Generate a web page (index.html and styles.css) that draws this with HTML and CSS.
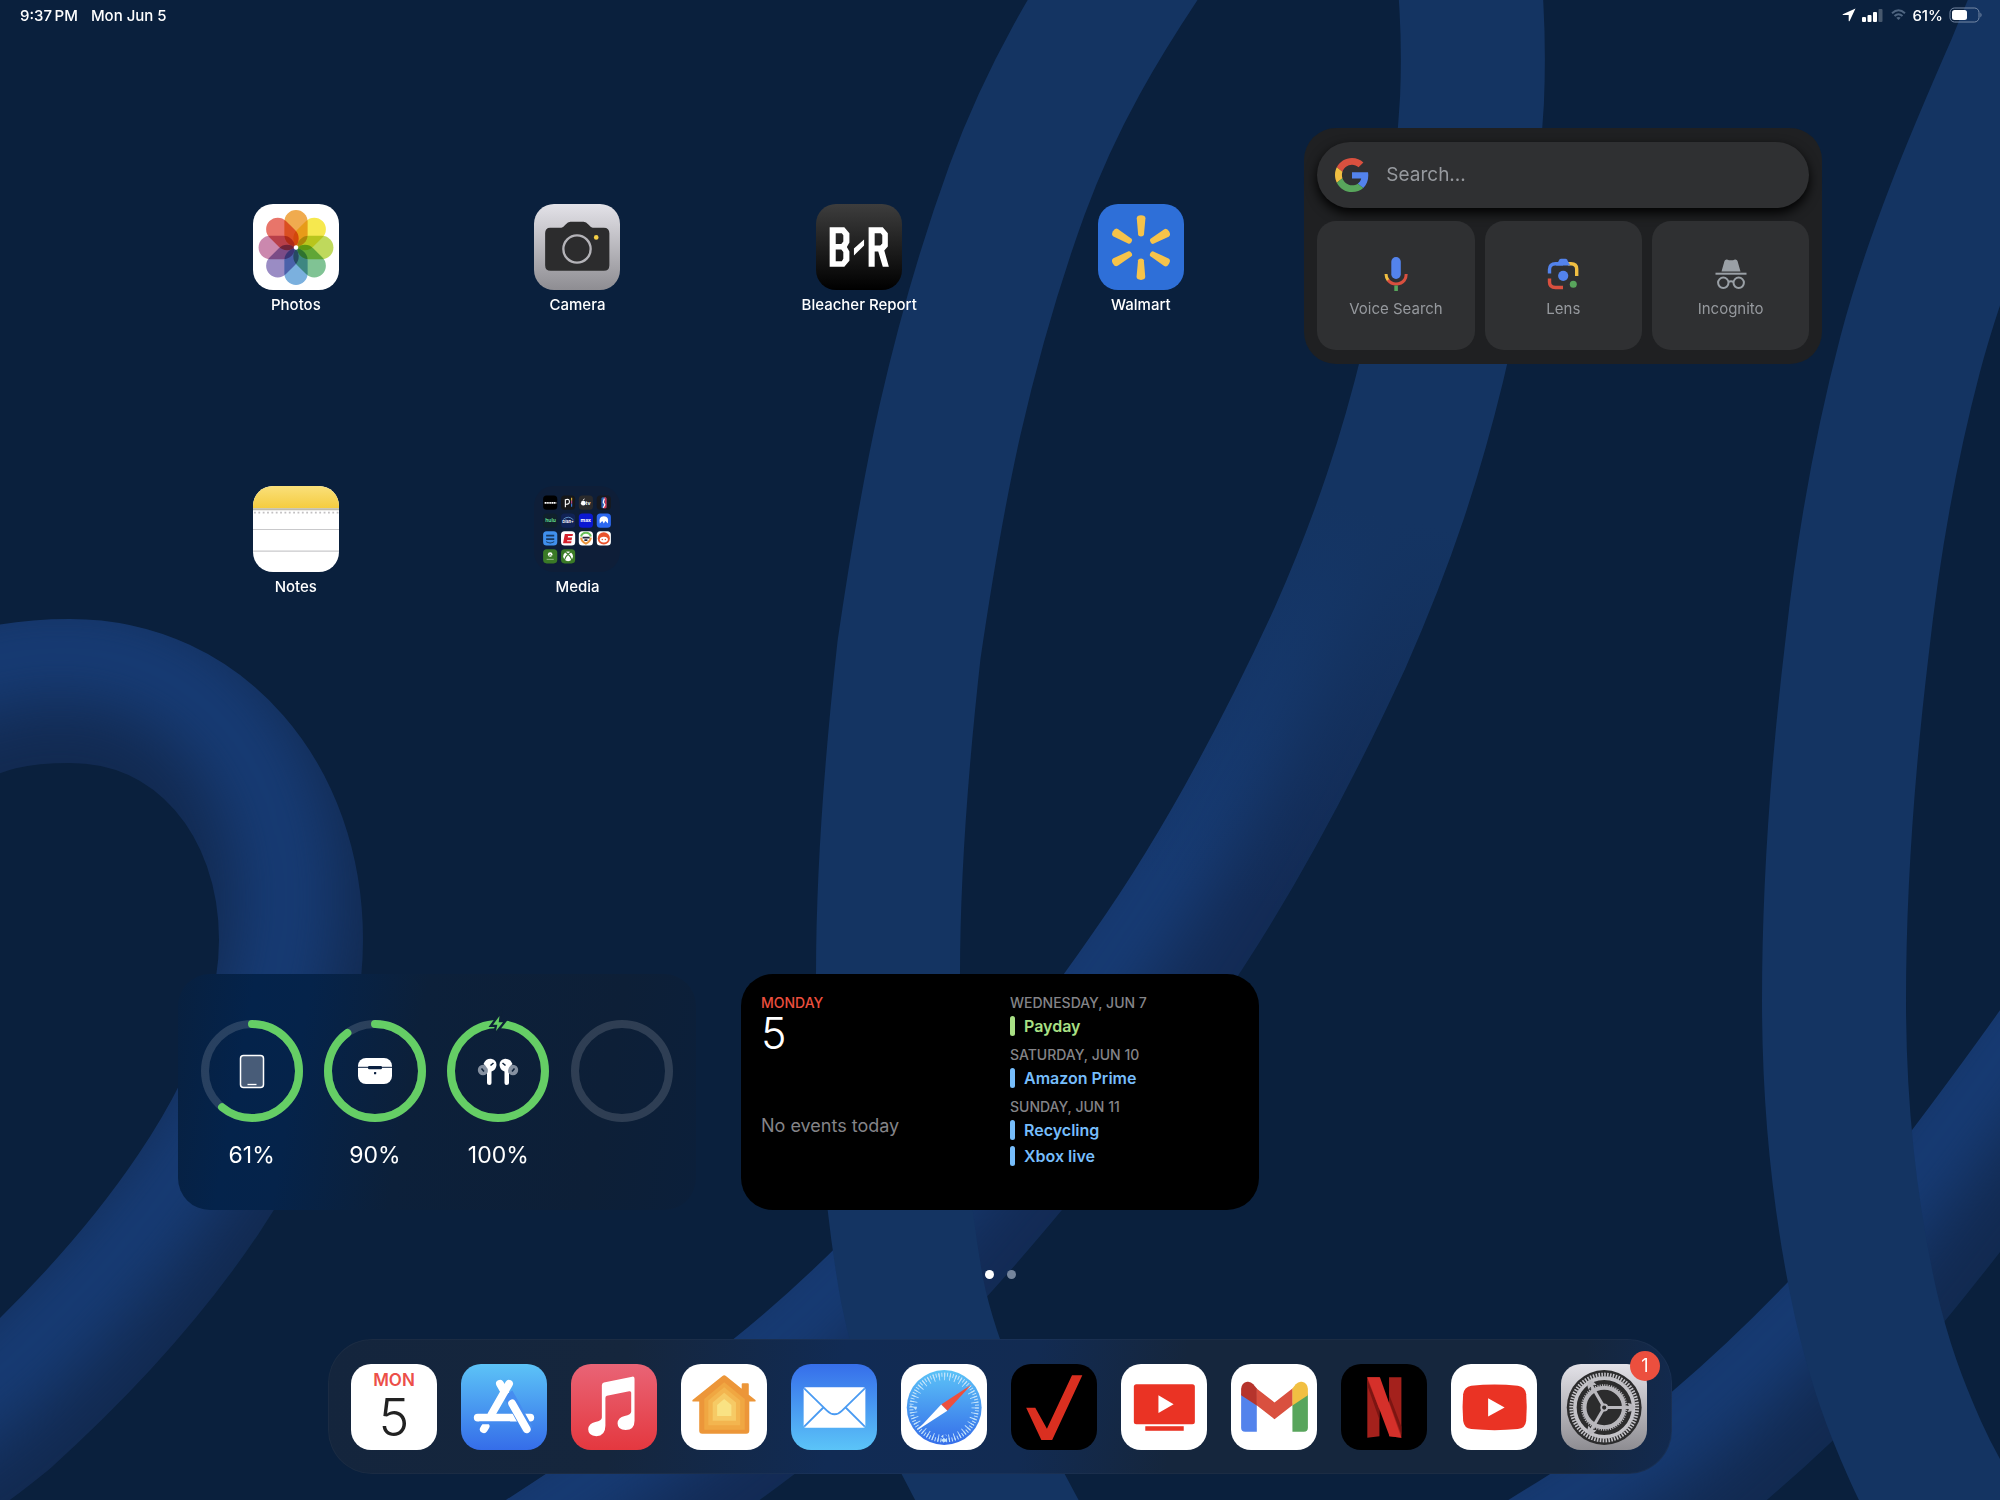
FILE: index.html
```html
<!DOCTYPE html>
<html lang="en">
<head>
<meta charset="utf-8">
<title>Home Screen</title>
<link rel="stylesheet" href="styles.css">
</head>
<body>
<svg class="wallpaper" viewBox="0 0 2000 1500" preserveAspectRatio="none" aria-hidden="true">
  <defs>
    <path id="s-left" d="M-80 735C-25 696 25 691 70 691C200 691 291 800 291 940C291 1110 140 1290 3 1414C-50 1457 -90 1484 -140 1504"/>
    <path id="s-mid" d="M500 1590C560 1550 610 1520 672 1474C741 1426 813 1373 895 1290C974 1207 1077 1083 1152 974C1229 865 1293 740 1340 638C1385 536 1411 455 1433 365C1455 275 1468 171 1472 100C1475 29 1470 -20 1464 -80"/>
    <path id="s-front" d="M1165 -80C1095 20 1050 100 1017 190C985 278 966 350 950 420C932 500 920 575 909 650C897 758 888 866 888 974C888 1080 893 1185 912 1290C925 1355 950 1415 983 1474C1000 1505 1015 1535 1035 1570"/>
    <path id="s-low" d="M1440 1620C1510 1585 1560 1553 1593 1532C1640 1502 1680 1478 1718 1447C1758 1413 1797 1376 1832 1340C1875 1297 1960 1190 2058 1053L2150 920"/>
    <path id="s-right" d="M2130 -160C2080 -80 2045 0 2018 67C1975 165 1935 260 1910 355C1885 450 1868 548 1857 648C1843 765 1834 880 1834 1000C1834 1110 1845 1210 1866 1305C1880 1365 1895 1405 1915 1450C1935 1495 1960 1535 1990 1575"/>
    <filter id="soft" filterUnits="userSpaceOnUse" x="-300" y="-300" width="2600" height="2100" color-interpolation-filters="sRGB"><feGaussianBlur stdDeviation="34"/></filter>
    <linearGradient id="fade" gradientUnits="userSpaceOnUse" x1="1330" y1="500" x2="1230" y2="900"><stop stop-color="#143462"/><stop offset="1" stop-color="#143462" stop-opacity="0"/></linearGradient>
    <mask id="m-left" maskUnits="userSpaceOnUse" x="0" y="0" width="2000" height="1500"><use href="#s-left" class="cut"/></mask>
    <mask id="m-mid" maskUnits="userSpaceOnUse" x="0" y="0" width="2000" height="1500"><use href="#s-mid" class="cut"/></mask>
    <mask id="m-low" maskUnits="userSpaceOnUse" x="0" y="0" width="2000" height="1500"><use href="#s-low" class="cut"/></mask>
  </defs>
  <rect width="2000" height="1500" fill="#0a203d"/>
  <g mask="url(#m-left)"><rect width="2000" height="1500" fill="#122a51"/><use href="#s-left" class="lit" transform="translate(-4 -42)"/></g>
  <g mask="url(#m-mid)"><rect width="2000" height="1500" fill="#132b55"/><use href="#s-mid" class="lit" transform="translate(-38 -30)"/><rect x="1000" width="700" height="1000" fill="url(#fade)"/></g>
  <g mask="url(#m-low)"><rect width="2000" height="1500" fill="#122a51"/><use href="#s-low" class="lit" transform="translate(-34 -34)"/></g>
  <use href="#s-front" class="ribbon"/>
  <use href="#s-right" class="ribbon"/>
</svg>

<header class="status">
  <span>9:37&thinsp;PM</span>
  <span class="date">Mon Jun 5</span>
  <span class="status-right">
    <svg width="14" height="14" viewBox="0 0 14 14"><path fill="#fff" d="M13.500 .5L.8 6.200Q.2 6.700 1 7H6.700V12.900Q7.100 13.600 7.600 12.900Z"/></svg>
    <svg class="signal" width="21" height="14" viewBox="0 0 21 14" fill="#fff"><rect y="9" width="4" height="5" rx="1"/><rect x="5.500" y="7" width="4" height="7" rx="1"/><rect x="11" y="4" width="4" height="10" rx="1"/><rect x="16.500" y="1" width="4" height="13" rx="1" opacity=".25"/></svg>
    <svg class="wifi" width="15" height="12" viewBox="0 0 15 12" fill="none" stroke="#4f6581" stroke-width="2"><path d="M1 4.200Q7.500 -1.600 14 4.200M3.500 7Q7.500 3.400 11.500 7"/><path d="M7.500 11L5.300 8.800Q7.500 7 9.700 8.800Z" fill="#4f6581" stroke="none"/></svg>
    <span>61%</span>
    <svg width="34" height="16" viewBox="0 0 34 16"><rect x="1" y="1" width="29" height="14" rx="4.500" fill="none" stroke="#8294ae" stroke-opacity=".9"/><rect x="3" y="3" width="15" height="10" rx="2.500" fill="#fff"/><path d="M31.500 5.500Q33.500 8 31.500 10.500Z" fill="#8294ae"/></svg>
  </span>
</header>

<main class="grid">
  <a class="app" href="#photos">
    <svg class="icon" viewBox="0 0 85 85">
      <rect width="85" height="85" fill="#fff"/>
      <g class="petals">
        <rect x="31" y="6" width="23" height="36" rx="11.500" fill="#f0ab4f"/>
        <rect x="31" y="6" width="23" height="36" rx="11.500" fill="#f6e84e" transform="rotate(45 42.500 43)"/>
        <rect x="31" y="6" width="23" height="36" rx="11.500" fill="#bfd95c" transform="rotate(90 42.500 43)"/>
        <rect x="31" y="6" width="23" height="36" rx="11.500" fill="#80c394" transform="rotate(135 42.500 43)"/>
        <rect x="31" y="6" width="23" height="36" rx="11.500" fill="#7bb0de" transform="rotate(180 42.500 43)"/>
        <rect x="31" y="6" width="23" height="36" rx="11.500" fill="#9a8cc4" transform="rotate(225 42.500 43)"/>
        <rect x="31" y="6" width="23" height="36" rx="11.500" fill="#cb88ae" transform="rotate(270 42.500 43)"/>
        <rect x="31" y="6" width="23" height="36" rx="11.500" fill="#e8756a" transform="rotate(315 42.500 43)"/>
      </g>
      <circle cx="42.500" cy="43" r="2.200" fill="#fff"/>
    </svg>
    <span>Photos</span>
  </a>
  <a class="app" href="#camera">
    <svg class="icon" viewBox="0 0 85 85">
      <defs><linearGradient id="silver" x2="0" y2="1"><stop stop-color="#e3e2e8"/><stop offset="1" stop-color="#8e8d92"/></linearGradient></defs>
      <rect width="85" height="85" fill="url(#silver)"/>
      <path fill="#2c2c2d" d="M16 23.500H27Q29 23 31 20.500Q33.500 17.500 36 17.500H49Q51.500 17.500 54 20.500Q56 23 58 23.500H69Q74.500 23.500 74.500 29V60.500Q74.500 66 69 66H16.500Q11 66 11 60.500V29Q11 23.500 16 23.500Z"/>
      <circle cx="42.500" cy="44.500" r="13.500" fill="#2c2c2d" stroke="#b4b3b8" stroke-width="2.300"/>
      <circle cx="61.500" cy="33" r="2.300" fill="#f5cf46"/>
    </svg>
    <span>Camera</span>
  </a>
  <a class="app" href="#bleacher-report">
    <svg class="icon" viewBox="0 0 85 85">
      <defs><linearGradient id="ink" x2="0" y2="1"><stop stop-color="#3d3d3d"/><stop offset="1" stop-color="#000"/></linearGradient></defs>
      <rect width="85" height="85" fill="url(#ink)"/>
      <path fill="#fff" fill-rule="evenodd" d="M13.500 23H28L33 29V38L30.500 42.500L33 47V56L28 62H13.500ZM19.500 29V39.500H25L27 37V31L25.500 29ZM19.500 45V56.500H25.500L27 54V47.500L25 45ZM52 23H66L71 29V42L67.500 46L72 62H66L61.500 47H58V62H52ZM58 29V41H63.500L65.500 39V31L64 29ZM37.500 44L47.500 35V41L37.500 51Z"/>
    </svg>
    <span>Bleacher Report</span>
  </a>
  <a class="app" href="#walmart">
    <svg class="icon" viewBox="0 0 85 85">
      <defs><path id="ray" fill="#f6c34a" d="M38.300 14Q38.300 11 42.500 11Q46.900 11 46.900 14L45.400 30.500Q45.200 32.200 42.500 32.200Q39.900 32.200 39.700 30.500Z"/></defs>
      <rect width="85" height="85" fill="#2e6fd8"/>
      <use href="#ray"/><use href="#ray" transform="rotate(60 42.500 43)"/><use href="#ray" transform="rotate(120 42.500 43)"/><use href="#ray" transform="rotate(180 42.500 43)"/><use href="#ray" transform="rotate(240 42.500 43)"/><use href="#ray" transform="rotate(300 42.500 43)"/>
    </svg>
    <span>Walmart</span>
  </a>

  <section class="widget google" aria-label="Google">
    <label class="search">
      <svg width="34" height="34" viewBox="3 3 42 42"><path fill="#d9503f" d="M24 9.500c3.540 0 6.710 1.220 9.210 3.600l6.850-6.850C35.900 2.380 30.470 0 24 0 14.620 0 6.510 5.380 2.560 13.220l7.980 6.190C12.430 13.720 17.740 9.500 24 9.500z" transform="translate(3 3) scale(.875)"/><path fill="#5383ec" d="M46.980 24.550c0-1.570-.15-3.090-.38-4.550H24v9.020h12.940c-.58 2.960-2.260 5.480-4.780 7.180l7.730 6c4.510-4.180 7.090-10.360 7.090-17.650z" transform="translate(3 3) scale(.875)"/><path fill="#f1bf42" d="M10.530 28.590c-.48-1.450-.76-2.990-.76-4.590s.27-3.140.76-4.590l-7.980-6.190C.92 16.460 0 20.120 0 24c0 3.880.92 7.540 2.560 10.780l7.970-6.190z" transform="translate(3 3) scale(.875)"/><path fill="#58a55c" d="M24 48c6.480 0 11.930-2.130 15.890-5.810l-7.730-6c-2.150 1.450-4.920 2.300-8.160 2.300-6.260 0-11.570-4.220-13.470-9.910l-7.980 6.190C6.510 42.620 14.620 48 24 48z" transform="translate(3 3) scale(.875)"/></svg>
      <input type="text" placeholder="Search..." aria-label="Search">
    </label>
    <div class="tiles">
      <button type="button">
        <svg width="34" height="34" viewBox="0 0 34 34"><rect x="12.300" width="9.500" height="22" rx="4.700" fill="#5383ec"/><path d="M7 17Q7 20.500 9.300 23.500" fill="none" stroke="#f1bf42" stroke-width="3"/><path d="M9 23Q12 27 17 27Q22.500 27 25.500 23Q27.200 20.500 27.200 17" fill="none" stroke="#d9503f" stroke-width="3"/><rect x="15.300" y="28.500" width="3.600" height="5.500" fill="#58a55c"/></svg>
        <span>Voice Search</span>
      </button>
      <button type="button">
        <svg width="34" height="34" viewBox="0 0 34 34" fill="none" stroke-width="3.400"><path d="M3.500 16.500V12.500Q3.500 6.800 9.500 6.800H17" stroke="#5383ec"/><path d="M22 6.800H25Q30.700 6.800 30.700 12V19" stroke="#f1bf42"/><path d="M3.500 21.500V25Q3.500 30.500 9.500 30.500H17" stroke="#d9503f"/><path d="M10 8.500L13.500 2.500Q14 1.700 15 1.700H19.500Q20.500 1.700 21 2.500L24.300 8.500Z" fill="#5383ec"/><circle cx="17.200" cy="18.800" r="5.100" fill="#5383ec"/><circle cx="27.300" cy="27.300" r="3.500" fill="#58a55c"/></svg>
        <span>Lens</span>
      </button>
      <button type="button">
        <svg width="34" height="34" viewBox="0 0 34 34" fill="none" stroke="#9aa0a6" stroke-width="2"><path d="M7.500 14.500L10.500 4Q11 2.200 13 2.400Q17 4.300 21 2.400Q23 2.200 23.500 4L26.500 14.500Z" fill="#9aa0a6" stroke="none"/><path d="M1.500 16.700H32.500"/><circle cx="9.300" cy="25.800" r="5.200"/><circle cx="24.700" cy="25.800" r="5.200"/><path d="M14.400 25Q17 23.400 19.600 25"/></svg>
        <span>Incognito</span>
      </button>
    </div>
  </section>

  <a class="app second" href="#notes">
    <svg class="icon" viewBox="0 0 85 85">
      <defs><linearGradient id="pad" x2="0" y2="1"><stop stop-color="#fae07a"/><stop offset="1" stop-color="#f5cc40"/></linearGradient></defs>
      <rect width="85" height="85" fill="#fff"/><rect width="85" height="22" fill="url(#pad)"/><rect y="22" width="85" height="2" fill="#bdb9ac"/>
      <path d="M1 26.300H85" stroke="#c2c0c2" stroke-width="1.800" stroke-dasharray="1.800 2.500"/>
      <path d="M0 43H85M0 64.300H85" stroke="#c9c9cb" stroke-width="1.200"/>
    </svg>
    <span>Notes</span>
  </a>
  <a class="app" href="#media">
    <svg class="icon" viewBox="0 0 85 85">
      <rect width="85" height="85" fill="#0e1e38"/>
      <g class="mini">
        <rect x="9" y="9.500" width="14" height="14" rx="3.500" fill="#000"/><path d="M10.500 16.700H22" stroke="#fff" stroke-width="1.800" stroke-dasharray="1.400 .4"/>
        <rect x="26.700" y="9.500" width="14" height="14" rx="3.500" fill="#17181a"/><path d="M31 21V13.500Q35 12.300 35 15.500Q35 18.300 31.300 18" fill="none" stroke="#fff" stroke-width="1.100"/><path d="M37.200 11.500v3" stroke="#e8b83c" stroke-width="1.100"/><path d="M37.200 14.500v3" stroke="#c4458b" stroke-width="1.100"/><path d="M37.200 17.500v3" stroke="#3b7fe0" stroke-width="1.100"/>
        <rect x="44.300" y="9.500" width="14" height="14" rx="3.500" fill="#2a2a2c"/><circle cx="48.700" cy="17" r="2.300" fill="#fff"/><path d="M48.600 14.300Q48.700 13 50 12.800" stroke="#fff" stroke-width=".9" fill="none"/><text x="51" y="19">tv</text>
        <rect x="62" y="9.500" width="14" height="14" rx="3.500" fill="#17191f"/><rect x="66.600" y="11" width="5" height="11" rx="1.500" fill="#2c62b5"/><path d="M69.500 11h1.200q1 0 1 1.500v8q0 1.500-1 1.500H68.500l1.500-5z" fill="#d5344a"/><path d="M69.500 12.500L68.500 16L70 18.500L68.500 21.500" stroke="#fff" stroke-width="1.200" fill="none"/>
        <rect x="9" y="27.200" width="14" height="14" rx="3.500" fill="#10202b"/><text x="11" y="36" class="green">hulu</text>
        <rect x="26.700" y="27.200" width="14" height="14" rx="3.500" fill="#102255"/><path d="M29 33Q34 28.500 39 33.500" stroke="#7bb7ea" stroke-width=".7" fill="none"/><text x="28" y="37" class="small">Disn+</text>
        <rect x="44.300" y="27.200" width="14" height="14" rx="3.500" fill="#0a18d0"/><text x="46" y="36">max</text>
        <rect x="62" y="27.200" width="14" height="14" rx="3.500" fill="#2d68f0"/><path d="M65 37Q63.500 30 69 30Q74.500 30 73 37L70.500 34.500L69 37L67.500 34.500Z" fill="#fff"/>
        <rect x="9" y="44.800" width="14" height="14" rx="3.500" fill="#4090ee"/><path d="M12 49h8M12 52.500h8" stroke="#17375e" stroke-width="1.800"/><path d="M12 55Q16 57.500 20 55" stroke="#17375e" stroke-width="1" fill="none"/>
        <rect x="26.700" y="44.800" width="14" height="14" rx="3.500" fill="#fff"/><path d="M30.500 47.500h8l-.4 2h-4.500l-.2 1.500h4.300l-.6 2.500h-4.300l-.2 1h4.500l-.4 2h-8z" fill="#d5202c"/>
        <rect x="44.300" y="44.800" width="14" height="14" rx="3.500" fill="#fff"/><path d="M46.500 50a5 5 0 0 1 9.700 0" stroke="#6ac05a" stroke-width="2" fill="none"/><path d="M46.500 51Q47 55 51.300 57Q55.500 55 56.200 51" stroke="#eb943a" stroke-width="2" fill="none"/><path d="M48 51h7M49.800 53.500h3" stroke="#23263a" stroke-width="1.700"/>
        <rect x="62" y="44.800" width="14" height="14" rx="3.500" fill="#fff"/><circle cx="69" cy="51.800" r="6" fill="#e9532d"/><ellipse cx="69" cy="53" rx="4" ry="2.800" fill="#fff"/><circle cx="67.500" cy="52.800" r=".7" fill="#e9532d"/><circle cx="70.500" cy="52.800" r=".7" fill="#e9532d"/>
        <rect x="9" y="62.500" width="14" height="14" rx="3.500" fill="#3a7a26"/><circle cx="16" cy="67.700" r="2.300" fill="#fff"/><path d="M14.500 69.500L16 67.500L17.500 69.500" stroke="#3a7a26" stroke-width=".7" fill="none"/><path d="M12.500 72.500h7" stroke="#a9cb9f" stroke-width=".8"/>
        <rect x="26.700" y="62.500" width="14" height="14" rx="3.500" fill="#3a7a26"/><circle cx="33.700" cy="69.500" r="4.800" fill="#fff"/><path d="M30 73.500Q31 69.500 33.700 67.500Q36.500 69.500 37.500 73.500M31 65.500Q32.500 66 33.700 67.500Q35 66 36.500 65.500" stroke="#3a7a26" stroke-width="1.200" fill="none"/>
      </g>
    </svg>
    <span>Media</span>
  </a>

  <section class="widget batteries" aria-label="Batteries">
    <div class="cell">
      <svg class="ring" viewBox="0 0 102 102"><circle class="track" cx="51" cy="51" r="47"/><circle class="level" cx="51" cy="51" r="47" pathLength="100" stroke-dasharray="61 100"/><rect x="39.500" y="35.500" width="23" height="32" rx="3" fill="#485c78" stroke="#fff" stroke-width="1.500"/><path d="M46.500 64.500H55.500" stroke="#fff" stroke-width="1.300"/></svg>
      <span>61%</span>
    </div>
    <div class="cell">
      <svg class="ring" viewBox="0 0 102 102"><circle class="track" cx="51" cy="51" r="47"/><circle class="level" cx="51" cy="51" r="47" pathLength="100" stroke-dasharray="90 100"/><rect x="34" y="38" width="34" height="26" rx="8" fill="#fff"/><path d="M34 47.300H68" stroke="#0b2040" stroke-width="1"/><rect x="44" y="46" width="14" height="3.200" rx="1.200" fill="#0b2040"/><rect x="50" y="52" width="2.200" height="2.200" rx=".5" fill="#0b2040"/></svg>
      <span>90%</span>
    </div>
    <div class="cell">
      <svg class="ring" viewBox="0 0 102 102"><circle class="level" cx="51" cy="51" r="47"/><path d="M52.500 -4L46 4.800H50.300L49 11L56 2.200H51.700Z" fill="#65ce65" stroke="#0d2038" stroke-width="4.500" paint-order="stroke"/>
        <g id="bud"><circle cx="36" cy="50" r="5.200" fill="#8590a0"/><path d="M34.500 48.500L37 51.500" stroke="#0d2038" stroke-width="1.500"/><path d="M36.500 44Q38.500 38.500 44 38.700Q49.500 39.500 49.500 45Q49 50 44.500 51.500V63Q44.500 65 42.500 65Q40 65 40 63V53.500Q43 49 36.500 44Z" fill="#fff"/><path d="M43.500 45.500L46.500 43" stroke="#0d2038" stroke-width="1.500"/></g>
        <use href="#bud" transform="matrix(-1 0 0 1 102 0)"/></svg>
      <span>100%</span>
    </div>
    <div class="cell">
      <svg class="ring" viewBox="0 0 102 102"><circle class="track" cx="51" cy="51" r="47"/></svg>
    </div>
  </section>

  <section class="widget agenda" aria-label="Calendar">
    <div class="today">
      <h2>MONDAY</h2>
      <p class="number">5</p>
      <p class="none">No events today</p>
    </div>
    <div class="upcoming">
      <h3>WEDNESDAY, JUN 7</h3>
      <ul><li class="green">Payday</li></ul>
      <h3>SATURDAY, JUN 10</h3>
      <ul><li>Amazon Prime</li></ul>
      <h3>SUNDAY, JUN 11</h3>
      <ul><li>Recycling</li><li>Xbox live</li></ul>
    </div>
  </section>
</main>

<div class="pager"><i class="on"></i><i></i></div>

<nav class="dock" aria-label="Dock">
  <a class="icon cal" href="#calendar"><span class="month">MON</span><span class="day">5</span></a>
  <a href="#app-store" aria-label="App Store">
    <svg class="icon" viewBox="0 0 85 85"><defs><linearGradient id="sky" x2="0" y2="1"><stop stop-color="#5cc3f7"/><stop offset="1" stop-color="#356de9"/></linearGradient></defs><rect width="85" height="85" fill="url(#sky)"/>
    <g stroke="#fff" stroke-width="7.700" stroke-linecap="round" fill="none"><path d="M38.500 19.500L45 31"/><path d="M16.500 53H68.500M22.500 64.500L24.300 61.500"/><path d="M46 29L49.500 35L66 65" stroke="#468df0" stroke-width="11" stroke-linecap="butt"/><path d="M18 58.200H48.500" stroke="#438af0" stroke-width="2.500" stroke-linecap="butt"/><path d="M47.500 19.500L30 50"/><path d="M50.500 39L65 64.500"/></g></svg>
  </a>
  <a href="#music" aria-label="Music">
    <svg class="icon" viewBox="0 0 85 85"><defs><linearGradient id="rose" x2="0" y2="1"><stop stop-color="#e96476"/><stop offset="1" stop-color="#e4383f"/></linearGradient></defs><rect width="85" height="85" fill="url(#rose)"/><path fill="#fff" d="M30.500 21Q30.500 18.800 32.500 18.300L60.500 12.500Q62.800 12.200 62.800 14.500V56Q62.800 65 54 65.300Q46 65 46 58.500Q46.500 52.500 53 51.300Q59.500 50.500 59.500 47V28.500Q59.500 26.500 57.500 27L35.500 31.500Q34 31.800 34 33.500V61Q34 71 25 71.300Q17 71 17 64.500Q17.500 58.500 24 57.300Q30.500 56.500 30.500 53Z"/></svg>
  </a>
  <a href="#home" aria-label="Home">
    <svg class="icon" viewBox="0 0 85 85"><rect width="85" height="85" fill="#fff"/><path fill="#ec9639" d="M41 11.800Q42.700 10.500 44.400 11.800L60 24.500V20Q60 19 61 19H66Q67 19 67 20V30.500L73.600 35.500Q74.500 37 73 37H67.500V66Q67.500 69 64.500 69H21Q18 69 18 66V37H12Q10.500 37 11.400 35.500Z"/><path fill="#f0a742" d="M42.700 18L63 34.500V65H23V34.500Z"/><path fill="#f3b54f" d="M42.700 23L58.500 36V60.500H27V36Z"/><path fill="#f6ca65" d="M42.700 28.500L54.300 38V56H31.300V38Z"/><path fill="#f9e283" d="M42.700 34.500L49.800 40.500V51.300H35.700V40.500Z"/></svg>
  </a>
  <a href="#mail" aria-label="Mail">
    <svg class="icon" viewBox="0 0 85 85"><defs><linearGradient id="sea" x2="0" y2="1"><stop stop-color="#366eea"/><stop offset="1" stop-color="#5bc4f8"/></linearGradient></defs><rect width="85" height="85" fill="url(#sea)"/><rect x="12.500" y="23" width="61" height="40" rx="2" fill="#fff"/><path d="M13 24L35.500 46Q43 53.500 50.500 46L73 24M13 62L32 43M73 62L54 43" fill="none" stroke="#4a9bf2" stroke-width="1.800"/></svg>
  </a>
  <a href="#safari" aria-label="Safari">
    <svg class="icon" viewBox="0 0 85 85"><rect width="85" height="85" fill="#fff"/><circle cx="42.700" cy="43" r="37" fill="url(#sky)"/><g fill="none" stroke="#c5e4fb"><circle cx="42.700" cy="43" r="32.500" stroke-width="4" pathLength="144" stroke-dasharray=".7 1.300"/><circle cx="42.700" cy="43" r="30.500" stroke-width="7" pathLength="144" stroke-dasharray=".7 3.300"/></g><path fill="#ec4f3e" d="M69.500 20.500L45.800 46.300L39.700 40Z"/><path fill="#fff" d="M16 65.500L39.700 40L45.800 46.300Z"/></svg>
  </a>
  <a href="#verizon" aria-label="Verizon">
    <svg class="icon" viewBox="0 0 85 85"><rect width="85" height="85"/><path fill="#da2f20" d="M15 43.300H24L35.500 64L60.300 11H70.500L40.700 75H30Z"/></svg>
  </a>
  <a href="#youtube-tv" aria-label="YouTube TV">
    <svg class="icon" viewBox="0 0 85 85"><rect width="85" height="85" fill="#fff"/><rect x="12.700" y="20" width="60.300" height="39.500" rx="2.500" fill="#ea3324"/><rect x="24" y="61.500" width="38" height="4.500" fill="#ea3324"/><path fill="#fff" d="M37 31L52 39.700L37 48.500Z"/></svg>
  </a>
  <a href="#gmail" aria-label="Gmail">
    <svg class="icon" viewBox="0 0 85 85"><rect width="85" height="85" fill="#fff"/><path fill="#5383ec" d="M10 29L25.500 39V67H14Q10 67 10 63Z"/><path fill="#58a55c" d="M76 29L60.700 39V67H72Q76 67 76 63Z"/><path fill="#d9503f" d="M25 24L43 38L61 24V40.500L43 54.500L25 40.500Z"/><path fill="#b6342c" d="M10 31V24.500Q10.500 18.500 16 17.500Q19.500 17 22 20L25.500 24.300V41Z"/><path fill="#f1bf42" d="M76 31V24.500Q75.500 18.500 70 17.500Q66.500 17 64 20L60.700 24.300V41Z"/></svg>
  </a>
  <a href="#netflix" aria-label="Netflix">
    <svg class="icon" viewBox="0 0 85 85"><rect width="85" height="85"/><path fill="#a4211c" d="M26 13H38V71.500L26 73ZM47.500 13H59.700V73L47.500 71.500Z"/><path fill="#7c1512" d="M26 15L38 45V55L26 21ZM59.700 70L47.500 37V30L59.700 62Z"/><path fill="#d5302a" d="M26 13H38.500L59.700 73L48 71.500Z"/></svg>
  </a>
  <a href="#youtube" aria-label="YouTube">
    <svg class="icon" viewBox="0 0 85 85"><rect width="85" height="85" fill="#fff"/><path fill="#ea3324" d="M20 21.500Q43 19 66 21.500Q73.500 22.500 74.300 30Q75.500 43 74.300 56Q73.500 63.500 66 64.300Q43 66.500 20 64.300Q13 63.500 12 56Q10.800 43 12 30Q13 22.500 20 21.500Z"/><path fill="#fff" d="M36.700 33.800L53 43L36.700 52Z"/></svg>
  </a>
  <a class="badged" href="#settings" aria-label="Settings, 1 notification">
    <svg class="icon" viewBox="0 0 85 85"><rect width="85" height="85" fill="url(#silver)"/><g transform="translate(42.700 43)" fill="none"><circle r="37" fill="#2c2c2d"/><circle r="32.500" stroke="#c3c2c7" stroke-width="4" pathLength="144" stroke-dasharray="1.100 .9"/><circle r="29" stroke="#c3c2c7" stroke-width="3.600"/><circle r="19.500" stroke="#b8b7bc" stroke-width="4"/><circle r="22" stroke="#b8b7bc" stroke-width="2" pathLength="120" stroke-dasharray="1 1"/><g id="spoke"><path d="M3 0H28" stroke="#bab9be" stroke-width="3"/><path d="M23 -4.500Q29 -4 30 0Q29 4 23 4.500Q26 0 23 -4.500Z" fill="#bab9be"/></g><use href="#spoke" transform="rotate(120)"/><use href="#spoke" transform="rotate(240)"/><circle r="3" stroke="#bab9be" stroke-width="1.800"/></g></svg>
    <span class="badge">1</span>
  </a>
</nav>
</body>
</html>
```
FILE: styles.css
```css
* { box-sizing: border-box; }
body {
  margin: 0;
  min-height: 100vh;
  position: relative;
  overflow-x: hidden;
  display: flex;
  flex-direction: column;
  background: #0a203d;
  color: #fff;
  font-family: Inter, "Liberation Sans", sans-serif;
  font-size: 15px;
}
a { color: inherit; text-decoration: none; }
h2, h3, p, ul { margin: 0; padding: 0; }
svg { display: block; }

.wallpaper { position: absolute; inset: 0; width: 100%; height: 100%; z-index: -1; }
.cut { fill: none; stroke: #fff; stroke-width: 144px; }
.lit { fill: none; stroke: #173c76; stroke-width: 100px; filter: url(#soft); }
.ribbon { fill: none; stroke: #143462; stroke-width: 144px; }

.status {
  display: flex;
  align-items: center;
  height: 30px;
  padding: 0 17px 0 20px;
  font-size: 15px;
  font-weight: 500;
}
.date { margin-left: 13px; }
.status-right { margin-left: auto; display: flex; align-items: center; gap: 6px; }
.signal { margin-right: 2px; }

.grid {
  display: grid;
  grid-template-columns: repeat(6, 1fr);
  grid-auto-rows: 282px;
  padding: 75px 155px 0;
}
.app {
  display: flex;
  flex-direction: column;
  align-items: center;
  gap: 5px;
  padding-top: 99px;
  line-height: 20px;
  font-size: 15px;
  font-weight: 500;
  white-space: nowrap;
}
.second { grid-column: 1; }
.icon { width: 86px; height: 86px; border-radius: 20px; overflow: hidden; flex: none; }
.petals { isolation: isolate; }
.petals rect { mix-blend-mode: multiply; }
.mini text { font-size: 5px; font-weight: 700; fill: #fff; }
.mini .small { font-size: 4px; }
.mini .green { fill: #5fd58a; }

.widget {
  grid-column: span 2;
  place-self: center;
  width: 518px;
  height: 236px;
  border-radius: 32px;
}

.google { padding: 14px 13px; background: #1f2022; display: flex; flex-direction: column; gap: 13px; }
.search {
  display: flex;
  align-items: center;
  gap: 17px;
  height: 66px;
  padding: 0 18px;
  border-radius: 33px;
  background: #2f3032;
  box-shadow: 0 5px 12px #000;
}
.search input {
  flex: 1;
  min-width: 0;
  border: 0;
  padding: 0;
  background: none;
  outline: none;
  color: #fff;
  font: 400 19px/24px Inter, sans-serif;
}
.search input::placeholder { color: #96999e; opacity: 1; }
.tiles { flex: 1; display: grid; grid-template-columns: repeat(3, 1fr); gap: 10px; }
.tiles button {
  display: flex;
  flex-direction: column;
  align-items: center;
  justify-content: center;
  gap: 8px;
  border: 0;
  padding: 5px 0 0;
  border-radius: 19px;
  background: #2f3032;
  color: #96999e;
  font: 400 15px/20px Inter, sans-serif;
}

.batteries {
  grid-column: 1 / span 2;
  grid-row: 4;
  display: grid;
  grid-template-columns: repeat(4, 102px);
  justify-content: space-between;
  padding: 46px 23px 0;
  background: linear-gradient(100deg, #08203f 0%, #04234b 14%, #05234a 24%, #0c203a 45%, #0d1f37 80%, #0b1f3a 100%);
}
.cell { display: flex; flex-direction: column; align-items: center; gap: 18px; font-size: 23px; line-height: 30px; }
.ring { width: 102px; height: 102px; overflow: visible; }
.track { fill: none; stroke: #fff; stroke-opacity: .14; stroke-width: 8px; }
.level {
  fill: none;
  stroke: #65ce65;
  stroke-width: 8px;
  stroke-linecap: round;
  transform: rotate(-90deg);
  transform-origin: center;
}

.agenda {
  grid-row: 4;
  display: grid;
  grid-template-columns: 1fr 1fr;
  padding: 20px 0 20px 20px;
  background: #000;
}
.today { display: flex; flex-direction: column; }
.agenda h2, .agenda h3 { font-size: 14px; line-height: 18px; font-weight: 500; }
.agenda h2 { color: #ec4f3e; }
.agenda h3 { color: #848488; }
.number { font-size: 43px; line-height: 42px; font-weight: 300; }
.none { margin-top: 60px; font-size: 18px; line-height: 24px; color: #848488; }
.upcoming ul { list-style: none; display: grid; gap: 6px; margin: 4px 0 10px; }
.upcoming li {
  display: flex;
  gap: 9px;
  font-size: 16px;
  line-height: 20px;
  font-weight: 600;
  color: #76bdfb;
}
.upcoming li::before { content: ""; width: 5px; border-radius: 3px; background: currentColor; }
.upcoming li.green { color: #a9e085; }

.pager { display: flex; justify-content: center; gap: 13px; padding: 37px 0 60px; }
.pager i { width: 9px; height: 9px; border-radius: 50%; background: #75859c; }
.pager .on { background: #fff; }

.dock {
  align-self: center;
  display: flex;
  gap: 24px;
  padding: 25px 25px 24px 23px;
  margin-bottom: 26px;
  border-radius: 44px;
  background: linear-gradient(100deg, #14253d 0%, #15263d 22%, #112b54 38%, #122b52 52%, #15263d 63%, #15263d 92%, #122a50 100%);
  box-shadow: inset 0 0 0 1px rgba(255, 255, 255, .03);
}
.cal { display: flex; flex-direction: column; align-items: center; background: #fff; padding-top: 6px; }
.month { color: #ec4f49; font-size: 17px; line-height: 20px; font-weight: 600; }
.day { color: #222; font-size: 52px; line-height: 55px; font-weight: 300; }
.badged { position: relative; }
.badge {
  position: absolute;
  top: -13px;
  right: -13px;
  width: 30px;
  height: 30px;
  border-radius: 50%;
  background: #ec4f3e;
  font-size: 18px;
  line-height: 30px;
  text-align: center;
}
```
